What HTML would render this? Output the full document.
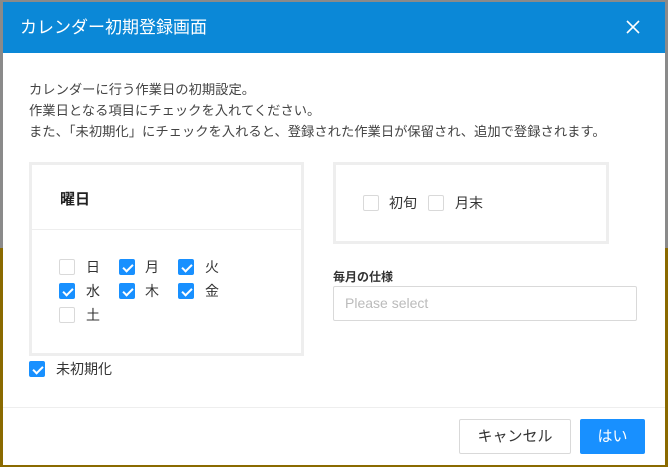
<!DOCTYPE html>
<html><head><meta charset="utf-8"><style>
*{box-sizing:border-box;margin:0;padding:0}
body{width:668px;height:467px;position:relative;overflow:hidden;background:#8a8a8a;font-family:"Liberation Sans","Noto Sans CJK JP",sans-serif;color:#333}
.gold{position:absolute;background:#8a6a00}
.dlg{position:absolute;left:3px;top:2px;width:662px;height:463px;background:#fff}
.hd{position:absolute;left:0;top:0;width:662px;height:51px;background:#0b88d7;color:#fff;font-size:17px;line-height:51px;padding-left:17px}
.x{position:absolute;right:25px;top:18px}
.abs{position:absolute;white-space:nowrap}
.desc{left:26px;top:77px;font-size:13.3px;line-height:21px;color:#444}
.box{position:absolute;border:3px solid #eee;background:#fff}
.cb{position:absolute;width:16px;height:16px;border:1px solid #d9d9d9;border-radius:2px;background:#fff}
.cb.on{background:#1890ff;border-color:#1890ff}
.cb.on::after{content:"";position:absolute;left:4.5px;top:1.5px;width:4px;height:8px;border:solid #fff;border-width:0 2px 2px 0;transform:rotate(45deg)}
.lb{position:absolute;font-size:14px;line-height:16px;color:#333}
</style></head><body>
<div class="gold" style="left:0;top:248px;width:3px;height:219px"></div>
<div class="gold" style="left:665px;top:248px;width:3px;height:219px"></div>
<div class="gold" style="left:0;top:465px;width:668px;height:2px"></div>
<div class="dlg">
<div class="hd">カレンダー初期登録画面
<svg class="x" width="14" height="14" viewBox="0 0 14 14"><path d="M1 1L13 13M13 1L1 13" stroke="#fff" stroke-width="1.6"/></svg></div>
<div class="abs desc">カレンダーに行う作業日の初期設定。<br>作業日となる項目にチェックを入れてください。<br>また、「未初期化」にチェックを入れると、登録された作業日が保留され、追加で登録されます。</div>
</div>
<div class="box" style="left:29px;top:162px;width:275px;height:194px">
<div class="abs" style="left:28px;top:23px;font-size:15px;font-weight:bold;color:#222">曜日</div>
<div class="abs" style="left:0;top:64px;width:269px;height:1px;background:#eee"></div>
</div>
<div class="cb" style="left:59px;top:259px"></div><div class="lb" style="left:86px;top:259px">日</div>
<div class="cb on" style="left:119px;top:259px"></div><div class="lb" style="left:145px;top:259px">月</div>
<div class="cb on" style="left:178px;top:259px"></div><div class="lb" style="left:205px;top:259px">火</div>
<div class="cb on" style="left:59px;top:283px"></div><div class="lb" style="left:86px;top:283px">水</div>
<div class="cb on" style="left:119px;top:283px"></div><div class="lb" style="left:145px;top:283px">木</div>
<div class="cb on" style="left:178px;top:283px"></div><div class="lb" style="left:205px;top:283px">金</div>
<div class="cb" style="left:59px;top:307px"></div><div class="lb" style="left:86px;top:307px">土</div>
<div class="box" style="left:333px;top:162px;width:276px;height:82px"></div>
<div class="cb" style="left:363px;top:195px"></div><div class="lb" style="left:389px;top:195px">初旬</div>
<div class="cb" style="left:428px;top:195px"></div><div class="lb" style="left:455px;top:195px">月末</div>
<div class="abs" style="left:333px;top:268px;font-size:12px;font-weight:bold;color:#333">毎月の仕様</div>
<div class="abs" style="left:333px;top:286px;width:304px;height:35px;border:1px solid #d9d9d9;border-radius:2px;font-size:14px;color:#bbb;line-height:33px;padding-left:11px">Please select</div>
<div class="cb on" style="left:29px;top:361px"></div><div class="lb" style="left:56px;top:361px">未初期化</div>
<div class="abs" style="left:3px;top:407px;width:662px;height:1px;background:#eee"></div>
<div class="abs" style="left:459px;top:419px;width:112px;height:35px;border:1px solid #d9d9d9;border-radius:2px;font-size:15px;line-height:33px;text-align:center;color:#333">キャンセル</div>
<div class="abs" style="left:580px;top:419px;width:65px;height:35px;background:#1890ff;border-radius:2px;font-size:15px;line-height:35px;text-align:center;color:#fff">はい</div>
</body></html>
